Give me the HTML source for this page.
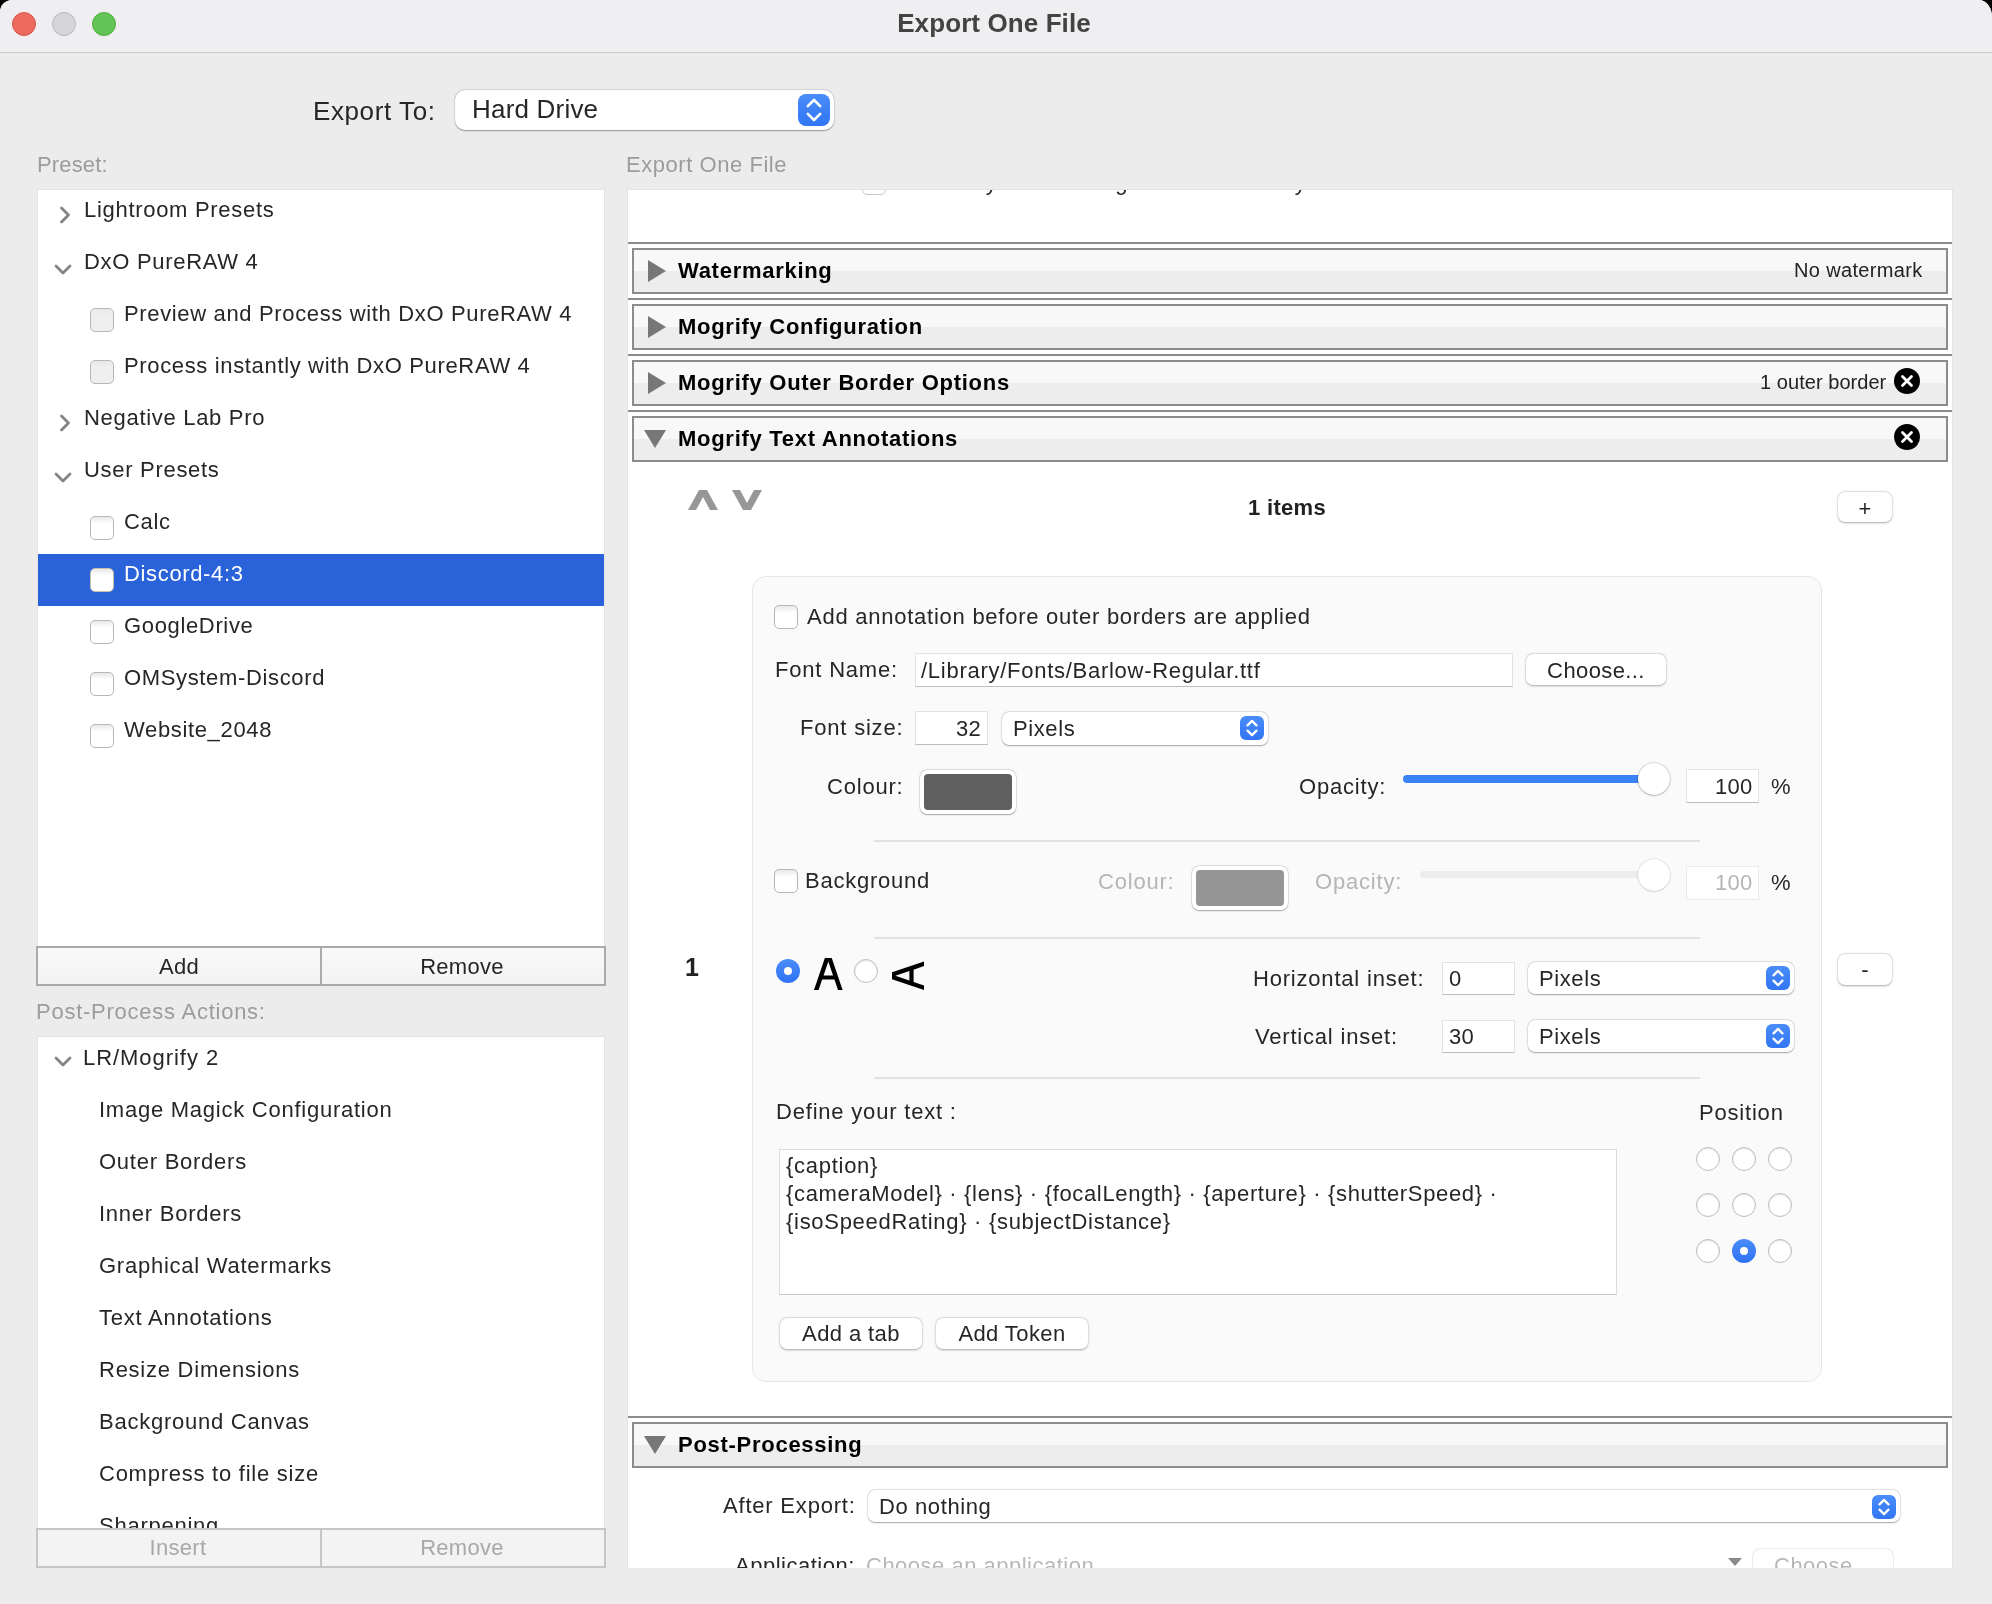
<!DOCTYPE html><html><head><meta charset="utf-8"><style>
html,body{margin:0;padding:0;}
body{width:1992px;height:1604px;overflow:hidden;background:#000;position:relative;font-family:"Liberation Sans", sans-serif;color:#262626;}
.t{position:absolute;white-space:pre;will-change:transform;}
.r{position:absolute;box-sizing:border-box;}
svg{position:absolute;overflow:visible;}
</style></head><body>
<div class="r" style="left:0px;top:0px;width:1992px;height:1604px;background:#ECECEC;border-top-left-radius:12px;border-top-right-radius:13px 17px;"></div>
<div class="r" style="left:0px;top:0px;width:1992px;height:52px;background:#EFEFF1;border-top-left-radius:12px;border-top-right-radius:13px 17px;"></div>
<div class="r" style="left:0px;top:52px;width:1992px;height:1px;background:#C9C9C9;"></div>
<div class="r" style="left:12px;top:12px;width:24px;height:24px;background:#EE6A5F;border:1px solid #D5564B;border-radius:50%;"></div>
<div class="r" style="left:52px;top:12px;width:24px;height:24px;background:#D6D6D8;border:1px solid #B9B9BB;border-radius:50%;"></div>
<div class="r" style="left:92px;top:12px;width:24px;height:24px;background:#61C454;border:1px solid #4FAE42;border-radius:50%;"></div>
<div class="t" style="left:-6px;width:2000px;text-align:center;top:10px;font-size:26px;line-height:26px;font-weight:700;color:#434343;letter-spacing:0.1px;">Export One File</div>
<div class="t" style="right:1556.4px;top:98px;font-size:26px;line-height:26px;letter-spacing:0.6px;">Export To:</div>
<div class="r" style="left:455px;top:90px;width:379px;height:40px;background:#fff;border-radius:10px;box-shadow:0 0.5px 1.5px rgba(0,0,0,0.35),0 0 0 0.5px rgba(0,0,0,0.08);"></div>
<div class="r" style="left:798px;top:94px;width:32px;height:32px;background:linear-gradient(#4A8DF8,#3175F5);border-radius:8px;"></div>
<svg style="left:798px;top:94px" width="32" height="32" viewBox="0 0 32 32"><path d="M9.8 12.2 L16 6 L22.2 12.2 M9.8 19.8 L16 26 L22.2 19.8" fill="none" stroke="#fff" stroke-width="2.6" stroke-linecap="round" stroke-linejoin="round"/></svg>
<div class="t" style="left:472px;top:96px;font-size:26px;line-height:26px;letter-spacing:0.2px;">Hard Drive</div>
<div class="t" style="left:37px;top:154px;font-size:22px;line-height:22px;color:#9C9C9C;letter-spacing:0.15px;">Preset:</div>
<div class="r" style="left:37px;top:189px;width:568px;height:758px;background:#fff;border:1px solid #E3E3E3;border-bottom:none;"></div>
<svg style="left:59px;top:206px" width="14" height="18" viewBox="0 0 14 18"><path d="M2.5 2 L9.5 9 L2.5 16" fill="none" stroke="#838383" stroke-width="2.8" stroke-linecap="round" stroke-linejoin="round"/></svg>
<div class="t" style="left:84px;top:199px;font-size:22px;line-height:22px;letter-spacing:0.7px;">Lightroom Presets</div>
<svg style="left:54px;top:264px" width="18" height="12" viewBox="0 0 18 12"><path d="M2 2 L9 9 L16 2" fill="none" stroke="#838383" stroke-width="2.8" stroke-linecap="round" stroke-linejoin="round"/></svg>
<div class="t" style="left:84px;top:251px;font-size:22px;line-height:22px;letter-spacing:0.7px;">DxO PureRAW 4</div>
<div class="r" style="left:90px;top:308px;width:24px;height:24px;background:linear-gradient(#E9E9E9,#EFEFEF 30%,#EFEFEF);border:1px solid #B7B7B7;border-radius:5px;"></div>
<div class="t" style="left:124px;top:303px;font-size:22px;line-height:22px;letter-spacing:0.65px;">Preview and Process with DxO PureRAW 4</div>
<div class="r" style="left:90px;top:360px;width:24px;height:24px;background:linear-gradient(#E9E9E9,#EFEFEF 30%,#EFEFEF);border:1px solid #B7B7B7;border-radius:5px;"></div>
<div class="t" style="left:124px;top:355px;font-size:22px;line-height:22px;letter-spacing:0.65px;">Process instantly with DxO PureRAW 4</div>
<svg style="left:59px;top:414px" width="14" height="18" viewBox="0 0 14 18"><path d="M2.5 2 L9.5 9 L2.5 16" fill="none" stroke="#838383" stroke-width="2.8" stroke-linecap="round" stroke-linejoin="round"/></svg>
<div class="t" style="left:84px;top:407px;font-size:22px;line-height:22px;letter-spacing:0.7px;">Negative Lab Pro</div>
<svg style="left:54px;top:472px" width="18" height="12" viewBox="0 0 18 12"><path d="M2 2 L9 9 L16 2" fill="none" stroke="#838383" stroke-width="2.8" stroke-linecap="round" stroke-linejoin="round"/></svg>
<div class="t" style="left:84px;top:459px;font-size:22px;line-height:22px;letter-spacing:0.7px;">User Presets</div>
<div class="r" style="left:90px;top:516px;width:24px;height:24px;background:linear-gradient(#E9E9E9,#fff 30%,#fff);border:1px solid #B7B7B7;border-radius:5px;"></div>
<div class="t" style="left:124px;top:511px;font-size:22px;line-height:22px;letter-spacing:0.65px;">Calc</div>
<div class="r" style="left:38px;top:554px;width:566px;height:52px;background:#2A62D9;"></div>
<div class="r" style="left:90px;top:568px;width:24px;height:24px;background:linear-gradient(#E9E9E9,#fff 30%,#fff);border:1px solid #B7B7B7;border-radius:5px;border-color:#C9BFB0;"></div>
<div class="t" style="left:124px;top:563px;font-size:22px;line-height:22px;color:#fff;letter-spacing:0.65px;">Discord-4:3</div>
<div class="r" style="left:90px;top:620px;width:24px;height:24px;background:linear-gradient(#E9E9E9,#fff 30%,#fff);border:1px solid #B7B7B7;border-radius:5px;"></div>
<div class="t" style="left:124px;top:615px;font-size:22px;line-height:22px;letter-spacing:0.65px;">GoogleDrive</div>
<div class="r" style="left:90px;top:672px;width:24px;height:24px;background:linear-gradient(#E9E9E9,#fff 30%,#fff);border:1px solid #B7B7B7;border-radius:5px;"></div>
<div class="t" style="left:124px;top:667px;font-size:22px;line-height:22px;letter-spacing:0.65px;">OMSystem-Discord</div>
<div class="r" style="left:90px;top:724px;width:24px;height:24px;background:linear-gradient(#E9E9E9,#fff 30%,#fff);border:1px solid #B7B7B7;border-radius:5px;"></div>
<div class="t" style="left:124px;top:719px;font-size:22px;line-height:22px;letter-spacing:0.65px;">Website_2048</div>
<div class="r" style="left:36px;top:946px;width:570px;height:40px;background:linear-gradient(#F9F9F9,#F3F3F3);border:2px solid #ABABAB;"></div>
<div class="r" style="left:320px;top:946px;width:2px;height:40px;background:#ABABAB;"></div>
<div class="t" style="left:-821px;width:2000px;text-align:center;top:956px;font-size:22px;line-height:22px;letter-spacing:0.3px;">Add</div>
<div class="t" style="left:-538px;width:2000px;text-align:center;top:956px;font-size:22px;line-height:22px;letter-spacing:0.3px;">Remove</div>
<div class="t" style="left:36px;top:1001px;font-size:22px;line-height:22px;color:#9C9C9C;letter-spacing:0.75px;">Post-Process Actions:</div>
<div class="r" style="left:37px;top:1036px;width:568px;height:493px;background:#fff;border:1px solid #E3E3E3;border-bottom:none;overflow:hidden;"></div>
<svg style="left:54px;top:1056px" width="18" height="12" viewBox="0 0 18 12"><path d="M2 2 L9 9 L16 2" fill="none" stroke="#838383" stroke-width="2.8" stroke-linecap="round" stroke-linejoin="round"/></svg>
<div class="t" style="left:83px;top:1047px;font-size:22px;line-height:22px;letter-spacing:0.95px;">LR/Mogrify 2</div>
<div class="t" style="left:99px;top:1099px;font-size:22px;line-height:22px;letter-spacing:0.75px;">Image Magick Configuration</div>
<div class="t" style="left:99px;top:1151px;font-size:22px;line-height:22px;letter-spacing:0.75px;">Outer Borders</div>
<div class="t" style="left:99px;top:1203px;font-size:22px;line-height:22px;letter-spacing:0.75px;">Inner Borders</div>
<div class="t" style="left:99px;top:1255px;font-size:22px;line-height:22px;letter-spacing:0.75px;">Graphical Watermarks</div>
<div class="t" style="left:99px;top:1307px;font-size:22px;line-height:22px;letter-spacing:0.75px;">Text Annotations</div>
<div class="t" style="left:99px;top:1359px;font-size:22px;line-height:22px;letter-spacing:0.75px;">Resize Dimensions</div>
<div class="t" style="left:99px;top:1411px;font-size:22px;line-height:22px;letter-spacing:0.75px;">Background Canvas</div>
<div class="t" style="left:99px;top:1463px;font-size:22px;line-height:22px;letter-spacing:0.75px;">Compress to file size</div>
<div class="r" style="left:38px;top:1508px;width:566px;height:20px;overflow:hidden;"><div class="t" style="left:61px;top:7px;font-size:22px;line-height:22px;letter-spacing:0.75px;color:#262626">Sharpening</div></div>
<div class="r" style="left:36px;top:1528px;width:570px;height:40px;background:#F3F3F3;border:2px solid #C6C6C6;"></div>
<div class="r" style="left:320px;top:1528px;width:2px;height:40px;background:#C6C6C6;"></div>
<div class="t" style="left:-822px;width:2000px;text-align:center;top:1537px;font-size:22px;line-height:22px;color:#A8A8A8;letter-spacing:0.3px;">Insert</div>
<div class="t" style="left:-538px;width:2000px;text-align:center;top:1537px;font-size:22px;line-height:22px;color:#A8A8A8;letter-spacing:0.3px;">Remove</div>
<div class="t" style="left:626px;top:154px;font-size:22px;line-height:22px;color:#9C9C9C;letter-spacing:0.55px;">Export One File</div>
<div class="r" style="left:627px;top:189px;width:1326px;height:1379px;background:#fff;border:1px solid #E3E3E3;border-bottom:none;"></div>
<div class="r" style="left:628px;top:190px;width:1324px;height:10px;overflow:hidden;"><div class="r" style="left:234px;top:-19px;width:24px;height:24px;border:1px solid #C8C8C8;border-radius:5px;background:#fff"></div><div class="t" style="left:269px;top:-18px;font-size:22px;line-height:22px;letter-spacing:0.6px;color:#262626">Write Keywords as Lightroom Hierarchy</div></div>
<div class="r" style="left:628px;top:242px;width:1324px;height:2px;background:#8C8C8C;"></div>
<div class="r" style="left:632px;top:248px;width:1316px;height:46px;background:linear-gradient(#F8F8F8 0,#F8F8F8 50%,#EDEDED 50%,#EDEDED 100%);border:2px solid #8C8C8C;"></div>
<svg style="left:648px;top:260px" width="18" height="22" viewBox="0 0 18 22"><path d="M0 0 L18 11 L0 22 Z" fill="#777"/></svg>
<div class="t" style="left:678px;top:260px;font-size:22px;line-height:22px;font-weight:700;color:#000;letter-spacing:0.72px;">Watermarking</div>
<div class="t" style="right:69.65px;top:260px;font-size:20px;line-height:20px;color:#222;letter-spacing:0.35px;">No watermark</div>
<div class="r" style="left:628px;top:298px;width:1324px;height:2px;background:#8C8C8C;"></div>
<div class="r" style="left:632px;top:304px;width:1316px;height:46px;background:linear-gradient(#F8F8F8 0,#F8F8F8 50%,#EDEDED 50%,#EDEDED 100%);border:2px solid #8C8C8C;"></div>
<svg style="left:648px;top:316px" width="18" height="22" viewBox="0 0 18 22"><path d="M0 0 L18 11 L0 22 Z" fill="#777"/></svg>
<div class="t" style="left:678px;top:316px;font-size:22px;line-height:22px;font-weight:700;color:#000;letter-spacing:0.72px;">Mogrify Configuration</div>
<div class="r" style="left:628px;top:354px;width:1324px;height:2px;background:#8C8C8C;"></div>
<div class="r" style="left:632px;top:360px;width:1316px;height:46px;background:linear-gradient(#F8F8F8 0,#F8F8F8 50%,#EDEDED 50%,#EDEDED 100%);border:2px solid #8C8C8C;"></div>
<svg style="left:648px;top:372px" width="18" height="22" viewBox="0 0 18 22"><path d="M0 0 L18 11 L0 22 Z" fill="#777"/></svg>
<div class="t" style="left:678px;top:372px;font-size:22px;line-height:22px;font-weight:700;color:#000;letter-spacing:0.72px;">Mogrify Outer Border Options</div>
<div class="t" style="right:105.95px;top:372px;font-size:20px;line-height:20px;color:#222;letter-spacing:0.05px;">1 outer border</div>
<svg style="left:1894px;top:368px" width="26" height="26" viewBox="0 0 26 26"><circle cx="13" cy="13" r="13" fill="#000"/><path d="M8.5 8.5 L17.5 17.5 M17.5 8.5 L8.5 17.5" stroke="#fff" stroke-width="2.8" stroke-linecap="round"/></svg>
<div class="r" style="left:628px;top:410px;width:1324px;height:2px;background:#8C8C8C;"></div>
<div class="r" style="left:632px;top:416px;width:1316px;height:46px;background:linear-gradient(#F8F8F8 0,#F8F8F8 50%,#EDEDED 50%,#EDEDED 100%);border:2px solid #8C8C8C;"></div>
<svg style="left:644px;top:430px" width="22" height="18" viewBox="0 0 22 18"><path d="M0 0 L22 0 L11 18 Z" fill="#777"/></svg>
<div class="t" style="left:678px;top:428px;font-size:22px;line-height:22px;font-weight:700;color:#000;letter-spacing:0.72px;">Mogrify Text Annotations</div>
<svg style="left:1894px;top:424px" width="26" height="26" viewBox="0 0 26 26"><circle cx="13" cy="13" r="13" fill="#000"/><path d="M8.5 8.5 L17.5 17.5 M17.5 8.5 L8.5 17.5" stroke="#fff" stroke-width="2.8" stroke-linecap="round"/></svg>
<svg style="left:688px;top:490px" width="30" height="20" viewBox="0 0 30 20"><path d="M0 20 L11 0 L19 0 L30 20 L22 20 L15 7 L8 20 Z" fill="#979797"/></svg>
<svg style="left:732px;top:490px" width="30" height="20" viewBox="0 0 30 20"><path d="M0 0 L8 0 L15 13 L22 0 L30 0 L19 20 L11 20 Z" fill="#979797"/></svg>
<div class="t" style="left:287px;width:2000px;text-align:center;top:497px;font-size:22px;line-height:22px;font-weight:700;color:#222;letter-spacing:0.3px;">1 items</div>
<div class="r" style="left:1838px;top:492px;width:54px;height:30px;background:#fff;border-radius:7px;box-shadow:0 0.8px 2.2px rgba(0,0,0,0.32),0 0 0 0.5px rgba(0,0,0,0.06);"></div>
<div class="t" style="left:865px;width:2000px;text-align:center;top:498px;font-size:22px;line-height:22px;letter-spacing:0.4px;">+</div>
<div class="r" style="left:752px;top:576px;width:1070px;height:806px;background:#FAFAFA;border:1px solid #E6E6E6;border-radius:14px;"></div>
<div class="r" style="left:774px;top:605px;width:24px;height:24px;background:linear-gradient(#E9E9E9,#fff 30%,#fff);border:1px solid #B7B7B7;border-radius:5px;"></div>
<div class="t" style="left:807px;top:606px;font-size:22px;line-height:22px;letter-spacing:0.75px;">Add annotation before outer borders are applied</div>
<div class="t" style="right:1094.2px;top:659px;font-size:22px;line-height:22px;letter-spacing:0.8px;">Font Name:</div>
<div class="r" style="left:915px;top:653px;width:598px;height:34px;background:#fff;border:1px solid #E3E3E3;border-bottom:1px solid #BDBDBD;"></div>
<div class="t" style="left:921px;top:660px;font-size:22px;line-height:22px;letter-spacing:0.73px;">/Library/Fonts/Barlow-Regular.ttf</div>
<div class="r" style="left:1526px;top:654px;width:140px;height:31px;background:#fff;border-radius:7px;box-shadow:0 0.8px 2.2px rgba(0,0,0,0.32),0 0 0 0.5px rgba(0,0,0,0.06);"></div>
<div class="t" style="left:596px;width:2000px;text-align:center;top:660px;font-size:22px;line-height:22px;letter-spacing:0.4px;">Choose...</div>
<div class="t" style="right:1088.2px;top:717px;font-size:22px;line-height:22px;letter-spacing:0.8px;">Font size:</div>
<div class="r" style="left:915px;top:711px;width:73px;height:34px;background:#fff;border:1px solid #E3E3E3;border-bottom:1px solid #BDBDBD;"></div>
<div class="t" style="right:1010.7px;top:718px;font-size:22px;line-height:22px;letter-spacing:0.3px;">32</div>
<div class="r" style="left:1002px;top:712px;width:266px;height:33px;background:#fff;border-radius:7px;box-shadow:0 0.5px 1.5px rgba(0,0,0,0.3),0 0 0 0.5px rgba(0,0,0,0.12);"></div>
<div class="r" style="left:1240px;top:716px;width:24px;height:24px;background:linear-gradient(#4A8DF8,#3175F5);border-radius:6px;"></div>
<svg style="left:1240px;top:716px" width="24" height="24" viewBox="0 0 32 32"><path d="M10 12.5 L16 6.5 L22 12.5 M10 19.5 L16 25.5 L22 19.5" fill="none" stroke="#fff" stroke-width="3" stroke-linecap="round" stroke-linejoin="round"/></svg>
<div class="t" style="left:1013px;top:718px;font-size:22px;line-height:22px;letter-spacing:0.6px;">Pixels</div>
<div class="t" style="right:1088.2px;top:776px;font-size:22px;line-height:22px;letter-spacing:0.8px;">Colour:</div>
<div class="r" style="left:920px;top:770px;width:96px;height:44px;background:#fff;border-radius:7px;box-shadow:0 0.5px 1.5px rgba(0,0,0,0.3),0 0 0 0.5px rgba(0,0,0,0.12);"></div>
<div class="r" style="left:924px;top:774px;width:88px;height:36px;background:#5F5F5F;border-radius:4px;"></div>
<div class="t" style="right:606.2px;top:776px;font-size:22px;line-height:22px;letter-spacing:0.8px;">Opacity:</div>
<div class="r" style="left:1403px;top:775px;width:252px;height:8px;background:#3B82F6;border-radius:4px;"></div>
<div class="r" style="left:1638px;top:763px;width:32px;height:32px;background:#fff;border-radius:50%;box-shadow:0 0.5px 2px rgba(0,0,0,0.35),0 0 0 0.5px rgba(0,0,0,0.12);"></div>
<div class="r" style="left:1686px;top:769px;width:73px;height:34px;background:#fff;border:1px solid #E3E3E3;border-bottom:1px solid #BDBDBD;"></div>
<div class="t" style="right:239.7px;top:776px;font-size:22px;line-height:22px;letter-spacing:0.3px;">100</div>
<div class="t" style="left:1771px;top:776px;font-size:22px;line-height:22px;">%</div>
<div class="r" style="left:874px;top:840px;width:826px;height:2px;background:#E2E2E2;"></div>
<div class="r" style="left:774px;top:869px;width:24px;height:24px;background:linear-gradient(#E9E9E9,#fff 30%,#fff);border:1px solid #B7B7B7;border-radius:5px;"></div>
<div class="t" style="left:805px;top:870px;font-size:22px;line-height:22px;letter-spacing:0.75px;">Background</div>
<div class="t" style="right:817.2px;top:871px;font-size:22px;line-height:22px;color:#B5B5B5;letter-spacing:0.8px;">Colour:</div>
<div class="r" style="left:1192px;top:866px;width:96px;height:44px;background:#fff;border-radius:7px;box-shadow:0 0.5px 1.5px rgba(0,0,0,0.3),0 0 0 0.5px rgba(0,0,0,0.12);"></div>
<div class="r" style="left:1196px;top:870px;width:88px;height:36px;background:#959595;border-radius:4px;"></div>
<div class="t" style="right:590.2px;top:871px;font-size:22px;line-height:22px;color:#B5B5B5;letter-spacing:0.8px;">Opacity:</div>
<div class="r" style="left:1420px;top:871px;width:234px;height:7px;background:#EDEDED;border-radius:4px;"></div>
<div class="r" style="left:1638px;top:859px;width:32px;height:32px;background:#fff;border-radius:50%;box-shadow:0 0.5px 2px rgba(0,0,0,0.2),0 0 0 0.5px rgba(0,0,0,0.08);"></div>
<div class="r" style="left:1686px;top:866px;width:73px;height:34px;background:#fff;border:1px solid #EBEBEB;"></div>
<div class="t" style="right:239.7px;top:872px;font-size:22px;line-height:22px;color:#B5B5B5;letter-spacing:0.3px;">100</div>
<div class="t" style="left:1771px;top:872px;font-size:22px;line-height:22px;">%</div>
<div class="r" style="left:874px;top:937px;width:826px;height:2px;background:#E2E2E2;"></div>
<div class="t" style="left:-308px;width:2000px;text-align:center;top:955px;font-size:25px;line-height:25px;font-weight:700;color:#222;">1</div>
<div class="r" style="left:776px;top:959px;width:24px;height:24px;background:linear-gradient(#4A8DF8,#2F72F5);border-radius:50%;"></div>
<div class="r" style="left:784px;top:967px;width:8px;height:8px;background:#fff;border-radius:50%;"></div>
<svg style="left:0;top:0" width="1" height="1"><path transform="translate(828.3,974)" d="M-14.3 16 L-3.45 -16 L3.45 -16 L14.3 16 L9.70 16 L6.17 5.6 L-6.17 5.6 L-9.70 16 Z M0 -12.61 L4.75 1.4 L-4.75 1.4 Z" fill="#000" fill-rule="evenodd"/><path transform="translate(908,975.8) rotate(-90)" d="M-14.3 16 L-3.45 -16 L3.45 -16 L14.3 16 L9.70 16 L6.17 5.6 L-6.17 5.6 L-9.70 16 Z M0 -12.61 L4.75 1.4 L-4.75 1.4 Z" fill="#000" fill-rule="evenodd"/></svg>
<div class="r" style="left:854px;top:959px;width:24px;height:24px;background:#fff;border:1px solid #BDBDBD;border-radius:50%;box-shadow:inset 0 1px 1.5px rgba(0,0,0,0.12);"></div>
<div class="t" style="right:567.2px;top:968px;font-size:22px;line-height:22px;letter-spacing:0.8px;">Horizontal inset:</div>
<div class="r" style="left:1442px;top:962px;width:73px;height:33px;background:#fff;border:1px solid #E3E3E3;border-bottom:1px solid #BDBDBD;"></div>
<div class="t" style="left:1449px;top:968px;font-size:22px;line-height:22px;letter-spacing:0.3px;">0</div>
<div class="r" style="left:1528px;top:962px;width:266px;height:32px;background:#fff;border-radius:7px;box-shadow:0 0.5px 1.5px rgba(0,0,0,0.3),0 0 0 0.5px rgba(0,0,0,0.12);"></div>
<div class="r" style="left:1766px;top:966px;width:24px;height:24px;background:linear-gradient(#4A8DF8,#3175F5);border-radius:6px;"></div>
<svg style="left:1766px;top:966px" width="24" height="24" viewBox="0 0 32 32"><path d="M10 12.5 L16 6.5 L22 12.5 M10 19.5 L16 25.5 L22 19.5" fill="none" stroke="#fff" stroke-width="3" stroke-linecap="round" stroke-linejoin="round"/></svg>
<div class="t" style="left:1539px;top:968px;font-size:22px;line-height:22px;letter-spacing:0.6px;">Pixels</div>
<div class="t" style="right:594.2px;top:1026px;font-size:22px;line-height:22px;letter-spacing:0.8px;">Vertical inset:</div>
<div class="r" style="left:1442px;top:1020px;width:73px;height:33px;background:#fff;border:1px solid #E3E3E3;border-bottom:1px solid #BDBDBD;"></div>
<div class="t" style="left:1449px;top:1026px;font-size:22px;line-height:22px;letter-spacing:0.3px;">30</div>
<div class="r" style="left:1528px;top:1020px;width:266px;height:32px;background:#fff;border-radius:7px;box-shadow:0 0.5px 1.5px rgba(0,0,0,0.3),0 0 0 0.5px rgba(0,0,0,0.12);"></div>
<div class="r" style="left:1766px;top:1024px;width:24px;height:24px;background:linear-gradient(#4A8DF8,#3175F5);border-radius:6px;"></div>
<svg style="left:1766px;top:1024px" width="24" height="24" viewBox="0 0 32 32"><path d="M10 12.5 L16 6.5 L22 12.5 M10 19.5 L16 25.5 L22 19.5" fill="none" stroke="#fff" stroke-width="3" stroke-linecap="round" stroke-linejoin="round"/></svg>
<div class="t" style="left:1539px;top:1026px;font-size:22px;line-height:22px;letter-spacing:0.6px;">Pixels</div>
<div class="r" style="left:1838px;top:954px;width:54px;height:31px;background:#fff;border-radius:7px;box-shadow:0 0.8px 2.2px rgba(0,0,0,0.32),0 0 0 0.5px rgba(0,0,0,0.06);"></div>
<div class="t" style="left:865px;width:2000px;text-align:center;top:959px;font-size:22px;line-height:22px;letter-spacing:0.4px;">-</div>
<div class="r" style="left:874px;top:1077px;width:826px;height:2px;background:#E2E2E2;"></div>
<div class="t" style="left:776px;top:1101px;font-size:22px;line-height:22px;letter-spacing:0.8px;">Define your text :</div>
<div class="t" style="left:1699px;top:1102px;font-size:22px;line-height:22px;letter-spacing:0.8px;">Position</div>
<div class="r" style="left:779px;top:1149px;width:838px;height:146px;background:#fff;border:1px solid #DCDCDC;border-bottom-color:#C8C8C8;"></div>
<div class="t" style="left:786px;top:1155px;font-size:22px;line-height:22px;letter-spacing:0.72px;">{caption}</div>
<div class="t" style="left:786px;top:1183px;font-size:22px;line-height:22px;letter-spacing:0.66px;">{cameraModel} · {lens} · {focalLength} · {aperture} · {shutterSpeed} ·</div>
<div class="t" style="left:786px;top:1211px;font-size:22px;line-height:22px;letter-spacing:0.7px;">{isoSpeedRating} · {subjectDistance}</div>
<div class="r" style="left:1696px;top:1147px;width:24px;height:24px;background:#fff;border:1px solid #BDBDBD;border-radius:50%;box-shadow:inset 0 1px 1.5px rgba(0,0,0,0.12);"></div>
<div class="r" style="left:1732px;top:1147px;width:24px;height:24px;background:#fff;border:1px solid #BDBDBD;border-radius:50%;box-shadow:inset 0 1px 1.5px rgba(0,0,0,0.12);"></div>
<div class="r" style="left:1768px;top:1147px;width:24px;height:24px;background:#fff;border:1px solid #BDBDBD;border-radius:50%;box-shadow:inset 0 1px 1.5px rgba(0,0,0,0.12);"></div>
<div class="r" style="left:1696px;top:1193px;width:24px;height:24px;background:#fff;border:1px solid #BDBDBD;border-radius:50%;box-shadow:inset 0 1px 1.5px rgba(0,0,0,0.12);"></div>
<div class="r" style="left:1732px;top:1193px;width:24px;height:24px;background:#fff;border:1px solid #BDBDBD;border-radius:50%;box-shadow:inset 0 1px 1.5px rgba(0,0,0,0.12);"></div>
<div class="r" style="left:1768px;top:1193px;width:24px;height:24px;background:#fff;border:1px solid #BDBDBD;border-radius:50%;box-shadow:inset 0 1px 1.5px rgba(0,0,0,0.12);"></div>
<div class="r" style="left:1696px;top:1239px;width:24px;height:24px;background:#fff;border:1px solid #BDBDBD;border-radius:50%;box-shadow:inset 0 1px 1.5px rgba(0,0,0,0.12);"></div>
<div class="r" style="left:1732px;top:1239px;width:24px;height:24px;background:linear-gradient(#4A8DF8,#2F72F5);border-radius:50%;"></div>
<div class="r" style="left:1740px;top:1247px;width:8px;height:8px;background:#fff;border-radius:50%;"></div>
<div class="r" style="left:1768px;top:1239px;width:24px;height:24px;background:#fff;border:1px solid #BDBDBD;border-radius:50%;box-shadow:inset 0 1px 1.5px rgba(0,0,0,0.12);"></div>
<div class="r" style="left:780px;top:1318px;width:142px;height:31px;background:#fff;border-radius:7px;box-shadow:0 0.8px 2.2px rgba(0,0,0,0.32),0 0 0 0.5px rgba(0,0,0,0.06);"></div>
<div class="t" style="left:-149px;width:2000px;text-align:center;top:1323px;font-size:22px;line-height:22px;letter-spacing:0.4px;">Add a tab</div>
<div class="r" style="left:936px;top:1318px;width:152px;height:31px;background:#fff;border-radius:7px;box-shadow:0 0.8px 2.2px rgba(0,0,0,0.32),0 0 0 0.5px rgba(0,0,0,0.06);"></div>
<div class="t" style="left:12px;width:2000px;text-align:center;top:1323px;font-size:22px;line-height:22px;letter-spacing:0.4px;">Add Token</div>
<div class="r" style="left:628px;top:1416px;width:1324px;height:2px;background:#8C8C8C;"></div>
<div class="r" style="left:632px;top:1422px;width:1316px;height:46px;background:linear-gradient(#F8F8F8 0,#F8F8F8 50%,#EDEDED 50%,#EDEDED 100%);border:2px solid #8C8C8C;"></div>
<svg style="left:644px;top:1436px" width="22" height="18" viewBox="0 0 22 18"><path d="M0 0 L22 0 L11 18 Z" fill="#777"/></svg>
<div class="t" style="left:678px;top:1434px;font-size:22px;line-height:22px;font-weight:700;color:#000;letter-spacing:0.72px;">Post-Processing</div>
<div class="t" style="right:1136.2px;top:1495px;font-size:22px;line-height:22px;letter-spacing:0.8px;">After Export:</div>
<div class="r" style="left:868px;top:1490px;width:1032px;height:32px;background:#fff;border-radius:7px;box-shadow:0 0.5px 1.5px rgba(0,0,0,0.3),0 0 0 0.5px rgba(0,0,0,0.12);"></div>
<div class="r" style="left:1872px;top:1495px;width:24px;height:24px;background:linear-gradient(#4A8DF8,#3175F5);border-radius:6px;"></div>
<svg style="left:1872px;top:1495px" width="24" height="24" viewBox="0 0 32 32"><path d="M10 12.5 L16 6.5 L22 12.5 M10 19.5 L16 25.5 L22 19.5" fill="none" stroke="#fff" stroke-width="3" stroke-linecap="round" stroke-linejoin="round"/></svg>
<div class="t" style="left:879px;top:1496px;font-size:22px;line-height:22px;letter-spacing:0.6px;">Do nothing</div>
<div class="r" style="left:628px;top:1540px;width:1324px;height:28px;overflow:hidden;"><div class="t" style="right:1097px;top:15px;font-size:22px;line-height:22px;letter-spacing:0.5px;color:#262626">Application:</div><div class="t" style="left:238px;top:15px;font-size:22px;line-height:22px;letter-spacing:0.5px;color:#B8B8B8">Choose an application</div><svg style="left:1100px;top:18px" width="14" height="8" viewBox="0 0 14 8"><path d="M0 0 L14 0 L7 8 Z" fill="#8A8A8A"/></svg><div class="r" style="left:1125px;top:9px;width:140px;height:31px;background:#fff;border-radius:7px;box-shadow:0 0.5px 1.5px rgba(0,0,0,0.2),0 0 0 0.5px rgba(0,0,0,0.08);"></div><div class="t" style="left:1146px;top:15px;font-size:22px;line-height:22px;letter-spacing:0.5px;color:#B8B8B8">Choose...</div></div>
</body></html>
